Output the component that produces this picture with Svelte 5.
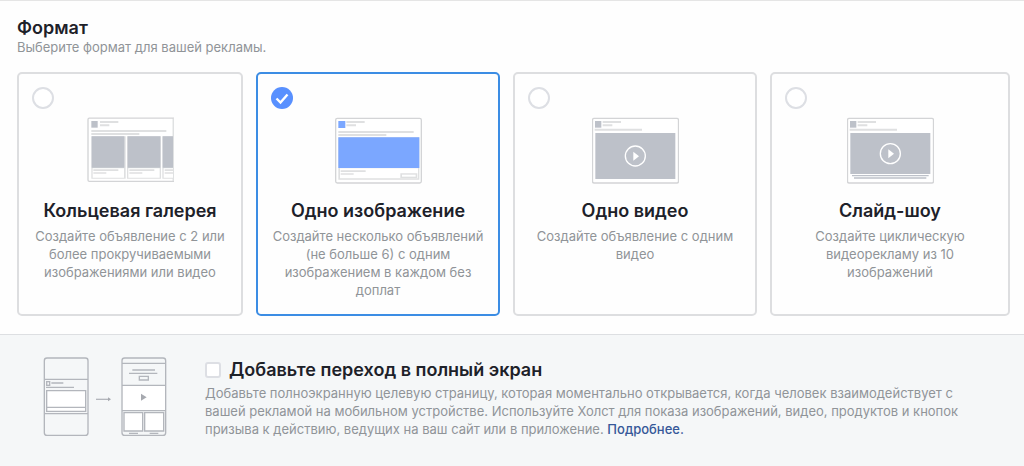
<script lang="ts">
  type Format = 'carousel' | 'image' | 'video' | 'slideshow'

  const formats: { id: Format; title: string; text: string }[] = [
    {
      id: 'carousel',
      title: 'Кольцевая галерея',
      text: 'Создайте объявление с 2 или более прокручиваемыми изображениями или видео'
    },
    {
      id: 'image',
      title: 'Одно изображение',
      text: 'Создайте несколько объявлений (не больше 6) с одним изображением в каждом без доплат'
    },
    { id: 'video', title: 'Одно видео', text: 'Создайте объявление с одним видео' },
    {
      id: 'slideshow',
      title: 'Слайд-шоу',
      text: 'Создайте циклическую видеорекламу из 10 изображений'
    }
  ]

  let selected: Format = $state('image')
  let fullscreen = $state(false)
</script>

{#snippet preview(id: Format)}
  {#if id === 'carousel'}
    <svg class="preview" viewBox="50 36 261 201" aria-hidden="true">
      <path class="frame" d="M309 39.500H57q-4 0-4 4V225q0 4 4 4H309z" />
      <path class="light" d="M308 40h2v188h-2z" />
      <path class="media" d="M63 48h19v20H63z" />
      <path class="line" d="M89 48h55v6H89zM89 58h28v6H89zM63 75h225v6H63zM63 84h144v6H63z" />
      <path class="line" d="M63 94h103v127H63zM170 94h102v127H170zM276 94h32v127h-32z" />
      <path class="media" d="M64 94h98v94H64zM172 94h98v94h-98zM277 94h31v94h-31z" />
      <path class="paper" d="M67 190h94v28H67zM174 190h94v28h-94zM280 190h28v28h-28z" />
      <path class="line" d="M69 193h75v5H69zM69 202h39v4H69zM177 193h75v5h-75zM177 202h39v4h-39zM283 193h25v5h-25zM283 202h25v4h-25z" />
    </svg>
  {:else if id === 'image'}
    <svg class="preview" viewBox="44 36 261 201" aria-hidden="true">
      <rect class="frame" x="46" y="40" width="257" height="194" rx="5" />
      <path class="active" d="M54 48h21v21H54z" />
      <path class="line" d="M78 48h55v6H78zM78 58h29v6H78zM54 78h226v6H54zM54 87h144v6H54zM54 97h243v127H54z" />
      <path class="paper" d="M59 190h234v30H59z" />
      <path class="active" d="M54 97h243v92H54z" />
      <path class="line" d="M61 196h75v5H61zM61 205h39v4H61zM240 205h51v14h-51z" />
      <path class="paper" d="M245 209h41v6h-41z" />
    </svg>
  {:else}
    <svg class="preview" viewBox="50 36 261 201" aria-hidden="true">
      <rect class="frame" x="51.500" y="40" width="258" height="194" rx="5" />
      <path class="media" d="M59 48h19v20H59z" />
      <path class="line" d="M82 48h55v6H82zM82 58h29v6H82zM58 71h142v6H58z" />
      {#if id === 'video'}
        <path class="media" d="M60 84h240v138H60z" />
        <circle class="ring" cx="180" cy="153" r="30" />
        <path class="paper" d="M174 140v27l17-13.500z" />
      {:else}
        <path class="media" d="M60 84h240v123H60zM65 210h230v4H65zM71 217h217v4H71z" />
        <circle class="ring" cx="180" cy="146" r="30" />
        <path class="paper" d="M174 133v27l17-13.500z" />
      {/if}
    </svg>
  {/if}
{/snippet}

<main>
  <section class="format">
    <h1>Формат</h1>
    <p>Выберите формат для вашей рекламы.</p>

    <div class="cards" role="radiogroup" aria-label="Формат">
      {#each formats as format (format.id)}
        <label class="card" class:selected={selected === format.id}>
          <input type="radio" name="format" value={format.id} bind:group={selected} />
          {@render preview(format.id)}
          <span class="title">{format.title}</span>
          <span class="text">{format.text}</span>
        </label>
      {/each}
    </div>
  </section>

  <section class="fullscreen">
    <svg class="phones" viewBox="39 33 372 243" aria-hidden="true">
      <rect class="phone" x="43" y="39" width="131" height="232" rx="8" />
      <path class="stroke" d="M43 103h131M43 206h131" />
      <rect class="stroke" x="50" y="110" width="9" height="11" />
      <path class="thin" d="M64 114h36M48 127h84" />
      <path class="box" d="M50 137h117v62H50zM50 187h117" />
      <path class="thin" d="M198 163h40" />
      <path class="solid" d="M234 157l9 6-9 6z" />

      <path class="paper" d="M277 121h130v76H277z" />
      <rect class="phone" x="276" y="39" width="131" height="232" rx="8" />
      <path class="stroke" d="M276 55h131M276 121h131M276 197h131" />
      <path class="thin" d="M307 75h68M297 85h85" />
      <path class="stroke" d="M328 94h27v11h-27z" />
      <path class="solid" d="M333 146v21l17-10.500z" />
      <path class="box" d="M282 203h56v55h-56zM344 203h57v55h-57z" />
      <path class="thin" d="M297 265h27M359 265h26" />
    </svg>

    <div class="details">
      <label>
        <input type="checkbox" bind:checked={fullscreen} />
        <span class="title">Добавьте переход в полный экран</span>
      </label>
      <p>
        Добавьте полноэкранную целевую страницу, которая моментально открывается, когда человек взаимодействует с
        вашей рекламой на мобильном устройстве. Используйте Холст для показа изображений, видео, продуктов и кнопок
        призыва к действию, ведущих на ваш сайт или в приложение. <a href="#more">Подробнее.</a>
      </p>
    </div>
  </section>
</main>

<style>
  :global(body) {
    margin: 0;
    background: #f5f7f8;
  }

  main {
    font-family: Inter, 'Liberation Sans', sans-serif;
    font-size: 13px;
    line-height: 18px;
    color: #909498;
  }

  h1,
  p {
    margin: 0;
  }

  h1,
  .title {
    font-size: 18px;
    line-height: 20px;
    font-weight: 600;
    color: #1d2129;
  }

  .format {
    padding: 17px 14px 18px 17px;
    background: #fefefe;
    border-top: 1px solid #e5e5e5;
    border-bottom: 1px solid #dddfe2;
  }

  .cards {
    display: grid;
    grid-template-columns: 226fr 244fr 244fr 240fr;
    gap: 13px;
    margin-top: 16px;
  }

  .card {
    display: flex;
    flex-direction: column;
    align-items: center;
    box-sizing: border-box;
    min-height: 244px;
    padding: 13px;
    border: 2px solid #dddee0;
    border-radius: 5px;
    text-align: center;
    cursor: pointer;
  }

  .card.selected {
    border-color: #3c8de4;
  }

  input {
    appearance: none;
    box-sizing: border-box;
    flex: none;
    margin: 0;
    background: #fff;
    border: 2px solid #dddfe4;
    cursor: pointer;
  }

  input[type='radio'] {
    align-self: flex-start;
    width: 22px;
    height: 22px;
    border-radius: 50%;
  }

  input[type='radio']:checked {
    border: none;
    background: #5890ff
      url("data:image/svg+xml,%3Csvg xmlns='http://www.w3.org/2000/svg' viewBox='0 0 22 22'%3E%3Cpath d='M5.500 11.500l4 4 7-8' fill='none' stroke='white' stroke-width='2.400'/%3E%3C/svg%3E");
  }

  .preview {
    flex: none;
    width: 87px;
    height: 67px;
    margin: 8px 0 17px;
  }

  .card .text {
    margin-top: 6px;
  }

  .frame {
    fill: #fff;
    stroke: #d3d4d6;
    stroke-width: 4;
  }

  .light {
    fill: #e6e7e8;
  }

  .line {
    fill: #dfe0e1;
  }

  .media {
    fill: #bdc1c9;
  }

  .active {
    fill: #7ba7ff;
  }

  .paper {
    fill: #fff;
  }

  .ring {
    fill: none;
    stroke: #fff;
    stroke-width: 4;
  }

  .fullscreen {
    display: flex;
    align-items: flex-start;
    gap: 38px;
    padding: 21px 43px 24px;
  }

  .phones {
    flex: none;
    width: 124px;
    height: 81px;
  }

  .phone,
  .stroke,
  .thin,
  .box {
    fill: none;
    stroke: #b3b6bc;
    stroke-width: 4;
  }

  .box {
    fill: #fff;
  }

  .solid {
    fill: #a6a9af;
  }

  .details {
    flex: 1;
  }

  .details label {
    display: flex;
    align-items: center;
    gap: 8px;
    margin: 4px 0;
    cursor: pointer;
  }

  input[type='checkbox'] {
    width: 16px;
    height: 16px;
    border-radius: 3px;
  }

  input[type='checkbox']:checked {
    background: #5890ff;
  }

  a {
    color: #365899;
    font-weight: 500;
    text-decoration: none;
  }

  a:hover {
    text-decoration: underline;
  }
</style>
